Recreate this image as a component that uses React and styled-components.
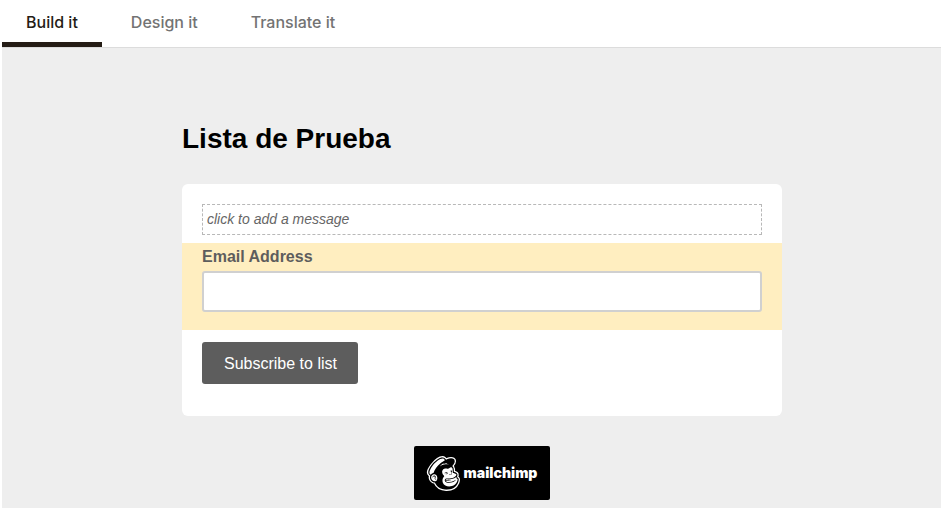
import React, { useState } from "react";
import styled, { createGlobalStyle } from "styled-components";
import { SiMailchimp } from "react-icons/si";

const GlobalStyle = createGlobalStyle`
  *, *::before, *::after { box-sizing: border-box; }
  body {
    margin: 0;
    background: #fff;
    font-family: "Liberation Sans", Arial, Helvetica, sans-serif;
  }
`;

const Page = styled.div`
  display: flex;
  flex-direction: column;
  min-height: 100vh;
  padding-left: 2px;
`;

const TabBar = styled.nav`
  display: flex;
  gap: 5px;
  border-bottom: 1px solid #dcdcdc;
`;

const Tab = styled.button`
  height: 47px;
  padding: 2px 24px 0;
  border: 0;
  border-bottom: 5px solid ${({ $active }) => ($active ? "#241c15" : "transparent")};
  background: none;
  color: ${({ $active }) => ($active ? "#241c15" : "#737373")};
  font: 500 16px/20px Inter, sans-serif;
  cursor: pointer;
`;

const Preview = styled.main`
  display: flex;
  flex: 1;
  flex-direction: column;
  align-items: center;
  padding: 71px 0 8px 21px;
  background: #eee;
`;

const Column = styled.div`
  width: 100%;
  max-width: 600px;
`;

const Title = styled.h1`
  margin: 0 0 25px;
  color: #000;
  font-size: 28px;
  line-height: 40px;
`;

const Card = styled.form`
  padding: 20px 0 32px;
  border-radius: 6px;
  background: #fff;
`;

const Message = styled.button`
  display: block;
  width: calc(100% - 40px);
  margin: 0 20px 8px;
  padding: 4px;
  border: 1px dashed #b8b8b8;
  background: none;
  color: #666;
  font: italic 14px/21px "Liberation Sans", Arial, sans-serif;
  text-align: left;
  cursor: text;
`;

const Field = styled.div`
  padding: 4px 20px 18px;
  background: #ffeec0;
`;

const Label = styled.label`
  display: block;
  margin-bottom: 4px;
  color: #5d5d5d;
  font-size: 16px;
  font-weight: 700;
  line-height: 20px;
`;

const TextInput = styled.input`
  display: block;
  width: 100%;
  height: 41px;
  padding: 8px;
  border: 2px solid #d0d0d0;
  border-radius: 3px;
  background: #fff;
  font: 16px "Liberation Sans", Arial, sans-serif;
`;

const Submit = styled.button`
  display: block;
  height: 42px;
  margin: 12px 20px 0;
  padding: 2px 21px 0 22px;
  border: 0;
  border-radius: 3px;
  background: #5d5d5d;
  color: #fff;
  font: 16px "Liberation Sans", Arial, sans-serif;
  cursor: pointer;
`;

const Badge = styled.a`
  display: flex;
  align-items: center;
  gap: 3px;
  height: 54px;
  margin-top: 30px;
  padding: 0 13px 0 12px;
  border-radius: 2px;
  background: #000;
  color: #fff;
  font: 900 14px/20px Inter, sans-serif;
  text-decoration: none;
`;

const Mark = styled.svg`
  flex: none;
  width: 35px;
  height: 35px;
`;

const Freddie = () => (
  <Mark viewBox="-1 -1 26 26" aria-hidden="true">
    <SiMailchimp x="0" y="0" size={24} color="#fff" stroke="#fff" strokeWidth="1.9" overflow="visible" />
    <path
      fill="#fff"
      d="M1.2 11.5 1.9 8.5 6.1 3.1 10.9.4 13.9 2.2 19.3 6.7V10.9L22 13V15.7L22.9 16.9 19.9 21.1 14.5 23.5 9.1 21.1 5.8 18.1 2.5 16.3 2.4 13.6Z"
    />
    <SiMailchimp x="0" y="0" size={24} color="#000" />
  </Mark>
);

const tabs = ["Build it", "Design it", "Translate it"];

export default function App() {
  const [active, setActive] = useState(tabs[0]);

  return (
    <Page>
      <GlobalStyle />
      <TabBar>
        {tabs.map((tab) => (
          <Tab key={tab} type="button" $active={tab === active} onClick={() => setActive(tab)}>
            {tab}
          </Tab>
        ))}
      </TabBar>
      <Preview>
        <Column>
          <Title>Lista de Prueba</Title>
          <Card onSubmit={(event) => event.preventDefault()}>
            <Message type="button">click to add a message</Message>
            <Field>
              <Label htmlFor="email">Email Address</Label>
              <TextInput id="email" type="email" />
            </Field>
            <Submit type="submit">Subscribe to list</Submit>
          </Card>
        </Column>
        <Badge href="#mailchimp">
          <Freddie />
          mailchimp
        </Badge>
      </Preview>
    </Page>
  );
}
